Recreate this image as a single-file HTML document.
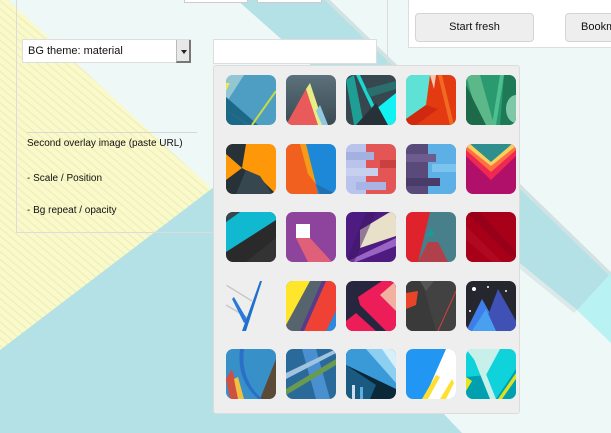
<!DOCTYPE html>
<html><head><meta charset="utf-8"><style>
*{box-sizing:border-box;margin:0;padding:0}
body{width:611px;height:433px;overflow:hidden;position:relative;background:#eef9f7;font-family:"Liberation Sans",sans-serif;font-size:10px;color:#111}
.abs{position:absolute}
.tile{position:absolute;width:50px;height:50px;border-radius:7px;overflow:hidden}
.tile svg{display:block}
</style></head><body>
<svg class="abs" style="left:0;top:0" width="611" height="433">
<defs><pattern id="st" width="6" height="6" patternUnits="userSpaceOnUse" patternTransform="rotate(40)"><rect width="6" height="6" fill="#f9f9c9"/><rect width="6" height="1.2" fill="#eeeebc"/></pattern></defs>
<polygon points="0,0 8,0 212,189 0,350" fill="url(#st)"/>
<polygon points="0,350 340,91 237,0 325,0 611,277 611,433 0,433" fill="#b4e1e6"/>
<polygon points="325,0 330,0 611,272 611,277" fill="#d2e2e2"/>
<polygon points="577,310 611,273 611,343" fill="#b9f2f2"/>
<polygon points="500,247 577,310 611,343 611,433 462,433 440,410" fill="#eef9f7"/>
<polygon points="500,247 577,310 574,313 498,251" fill="#dde9e9"/>
</svg>
<!-- top small selects -->
<div class="abs" style="left:184px;top:-10px;width:64px;height:13px;background:#fff;border:1px solid #ccc"></div>
<div class="abs" style="left:257px;top:-10px;width:65px;height:13px;background:#fff;border:1px solid #ccc"></div>
<!-- left panel -->
<div class="abs" style="left:16px;top:-5px;width:372px;height:238px;border:1px solid #dcdcdc;border-top:none"></div>
<div class="abs" style="left:22px;top:39px;width:169px;height:24px;background:#fff;border:1px solid #ddd;font-size:11px;padding:5px 0 0 5px">BG theme: material</div>
<div class="abs" style="left:176px;top:40px;width:15px;height:23px;background:#e8e8e8;border-left:1px solid #bbb;border-right:2px solid #777;border-bottom:2px solid #777"><div style="position:absolute;left:4px;top:10px;border-left:3px solid transparent;border-right:3px solid transparent;border-top:4px solid #222"></div></div>
<div class="abs" style="left:213px;top:39px;width:164px;height:25px;background:#fff;border:1px solid #ddd"></div>
<div class="abs" style="left:27px;top:132px;width:170px;height:1px;background:#d8d8d8"></div>
<div class="abs" style="left:27px;top:138px;font-size:10px">Second overlay image (paste URL)</div>
<div class="abs" style="left:27px;top:173px">- Scale / Position</div>
<div class="abs" style="left:27px;top:205px">- Bg repeat / opacity</div>
<!-- right panel -->
<div class="abs" style="left:408px;top:-2px;width:210px;height:50px;background:#fff;border:1px solid #ddd"></div>
<div class="abs" style="left:415px;top:13px;width:119px;height:29px;background:#eee;border:1px solid #d4d4d4;border-radius:4px;font-size:11px;text-align:center;line-height:27px">Start fresh</div>
<div class="abs" style="left:565px;top:13px;width:80px;height:29px;background:#eee;border:1px solid #d4d4d4;border-radius:4px;font-size:11px;line-height:27px;padding-left:15px">Bookmark</div>
<!-- popup -->
<div class="abs" style="left:213px;top:65px;width:307px;height:349px;background:#eeeeee;border:1px solid #dcdcdc;border-radius:3px"></div>

<div class="tile" style="left:226px;top:75px"><svg width="50" height="50"><rect width="50" height="50" fill="#4d9ec2"/><polygon points="0,0 18,0 0,28" fill="#93c6d2"/><polygon points="0,22 32,50 0,50" fill="#1d6886"/><polygon points="0,35 25,50 20,50" fill="#226f8a"/><line x1="26" y1="50" x2="50" y2="16" stroke="#c6d94a" stroke-width="2"/><polygon points="0,8 4,8 0,16" fill="#e8ec50"/></svg></div>
<div class="tile" style="left:286px;top:75px"><svg width="50" height="50"><defs><linearGradient id="g2" x1="0" y1="0" x2="0" y2="1"><stop offset="0" stop-color="#5b717b"/><stop offset="1" stop-color="#3b4a52"/></linearGradient></defs><rect width="50" height="50" fill="url(#g2)"/><polygon points="0,50 20,14 34,50" fill="#eb5a5a"/><polygon points="20,14 24,8 38,50 32,50" fill="#e8ee86"/><polygon points="30,36 34,30 42,50 36,50" fill="#90c8e0"/></svg></div>
<div class="tile" style="left:346px;top:75px"><svg width="50" height="50"><rect width="50" height="50" fill="#37474f"/><polygon points="0,5 8,0 18,50 8,50" fill="#1e9e94"/><polygon points="10,0 14,0 30,34 26,34" fill="#19d8d0"/><polygon points="30,34 50,18 50,50 24,50" fill="#12f2f2"/><polygon points="10,50 30,28 42,50" fill="#263238"/><polygon points="20,14 50,6 50,14 24,22" fill="#2b6e6e"/></svg></div>
<div class="tile" style="left:406px;top:75px"><svg width="50" height="50"><rect width="50" height="50" fill="#e33a12"/><polygon points="0,0 24,0 20,30 0,44" fill="#5ee2d6"/><polygon points="24,0 30,0 28,14" fill="#f6c8b0"/><polygon points="0,44 20,30 32,34 10,50 0,50" fill="#cf2a10"/><polygon points="32,0 36,0 48,50 44,50" fill="#f06a20"/></svg></div>
<div class="tile" style="left:466px;top:75px"><svg width="50" height="50"><rect width="50" height="50" fill="#2a9a70"/><polygon points="0,0 14,0 28,50 14,50" fill="#5cb888"/><polygon points="0,10 20,50 0,50" fill="#1c6a4a"/><polygon points="34,0 38,0 30,50 26,50" fill="#4ec090"/><polygon points="38,0 50,0 50,50 34,50" fill="#1e7a56"/><ellipse cx="50" cy="34" rx="10" ry="14" fill="#7ec8a8"/></svg></div>

<div class="tile" style="left:226px;top:144px"><svg width="50" height="50"><rect width="50" height="50" fill="#ff9808"/><polygon points="0,0 20,0 16,24 0,10" fill="#263238"/><polygon points="0,36 16,24 36,36 50,50 0,50" fill="#263238"/><polygon points="10,50 20,26 34,32 46,50" fill="#37474f"/></svg></div>
<div class="tile" style="left:286px;top:144px"><svg width="50" height="50"><rect width="50" height="50" fill="#1e88d8"/><polygon points="0,0 20,0 32,50 0,50" fill="#f26020"/><polygon points="14,0 20,0 30,40 22,30" fill="#f29c18"/><polygon points="30,40 50,50 34,50" fill="#2270b0"/></svg></div>
<div class="tile" style="left:346px;top:144px"><svg width="50" height="50"><rect width="50" height="50" fill="#b8c4ec"/><rect x="20" y="0" width="30" height="50" fill="#e45656"/><rect x="0" y="8" width="28" height="8" fill="#a4b0e0"/><rect x="0" y="24" width="32" height="8" fill="#c8d0f0"/><rect x="10" y="38" width="30" height="8" fill="#a8b4e4"/><rect x="34" y="16" width="16" height="8" fill="#c84040"/></svg></div>
<div class="tile" style="left:406px;top:144px"><svg width="50" height="50"><rect width="50" height="50" fill="#5a4a7a"/><rect x="22" y="0" width="28" height="50" fill="#5cb0e6"/><rect x="0" y="10" width="30" height="8" fill="#6e5c90"/><rect x="26" y="20" width="24" height="8" fill="#7cc4f0"/><rect x="0" y="34" width="34" height="8" fill="#4a3c6a"/></svg></div>
<div class="tile" style="left:466px;top:144px"><svg width="50" height="50"><rect width="50" height="50" fill="#b0106a"/><polygon points="0,0 50,0 50,12 25,36 0,12" fill="#ee2850"/><polygon points="0,0 50,0 50,6 25,28 0,6" fill="#ff7040"/><polygon points="0,0 50,0 50,2 25,22 0,2" fill="#f8d060"/><polygon points="4,0 46,0 25,18" fill="#2e8f8e"/></svg></div>

<div class="tile" style="left:226px;top:212px"><svg width="50" height="50"><rect width="50" height="50" fill="#2a2a2a"/><polygon points="0,10 14,0 50,0 50,8 0,40" fill="#10b8d0"/><polygon points="0,0 14,0 0,10" fill="#37474f"/><polygon points="20,50 50,26 50,50" fill="#333"/></svg></div>
<div class="tile" style="left:286px;top:212px"><svg width="50" height="50"><rect width="50" height="50" fill="#8e449c"/><polygon points="10,26 24,26 46,50 22,50" fill="#e0607a"/><rect x="10" y="12" width="14" height="14" fill="#fff"/></svg></div>
<div class="tile" style="left:346px;top:212px"><svg width="50" height="50"><rect width="50" height="50" fill="#4e1c80"/><polygon points="0,50 50,26 50,34 10,50" fill="#9a64c4"/><polygon points="14,18 44,0 50,0 50,24 14,36" fill="#e8e0c8"/><polygon points="20,0 30,0 8,50 0,50" fill="#3c1464" opacity=".5"/></svg></div>
<div class="tile" style="left:406px;top:212px"><svg width="50" height="50"><rect width="50" height="50" fill="#47808a"/><polygon points="0,0 24,0 12,50 0,50" fill="#e0222c"/><polygon points="12,50 22,30 32,30 42,50" fill="#b0404a"/><polygon points="20,24 26,16 28,24" fill="#1a9a9a"/></svg></div>
<div class="tile" style="left:466px;top:212px"><svg width="50" height="50"><rect width="50" height="50" fill="#a80018"/><polygon points="0,0 14,0 50,40 50,50" fill="#98001a"/><polygon points="0,14 36,50 26,50 0,28" fill="#b00820"/></svg></div>

<div class="tile" style="left:226px;top:281px"><svg width="50" height="50"><rect width="50" height="50" fill="#eeeeee"/><line x1="0" y1="4" x2="26" y2="20" stroke="#c8c8c8" stroke-width="1.5"/><line x1="0" y1="24" x2="24" y2="38" stroke="#c8c8c8" stroke-width="1.5"/><polygon points="8,16 22,40 18,42 6,18" fill="#2a7ad8"/><polygon points="34,0 36,0 20,50 16,50" fill="#1f6fd0"/></svg></div>
<div class="tile" style="left:286px;top:281px"><svg width="50" height="50"><rect width="50" height="50" fill="#56646e"/><polygon points="0,0 24,0 0,44" fill="#ffe62a"/><polygon points="40,0 50,0 50,50 18,50" fill="#f04234"/><polygon points="36,0 40,0 18,50 14,50" fill="#5a3a8a"/><polygon points="40,50 50,30 50,50" fill="#2a8ae0"/></svg></div>
<div class="tile" style="left:346px;top:281px"><svg width="50" height="50"><rect width="50" height="50" fill="#26263e"/><polygon points="12,16 36,0 50,0 50,50 40,50 14,24" fill="#ec1d58"/><polygon points="34,14 50,0 50,30" fill="#f2b0a0"/><polygon points="0,40 10,32 30,50 0,50" fill="#ec1d58"/></svg></div>
<div class="tile" style="left:406px;top:281px"><svg width="50" height="50"><rect width="50" height="50" fill="#424242"/><polygon points="0,0 16,0 30,50 0,50" fill="#3a3a3a"/><polygon points="0,12 12,10 10,24 0,28" fill="#e84428"/><line x1="50" y1="10" x2="32" y2="50" stroke="#d04040" stroke-width="1"/><polygon points="14,0 28,0 20,10" fill="#555"/></svg></div>
<div class="tile" style="left:466px;top:281px"><svg width="50" height="50"><rect width="50" height="50" fill="#26262e"/><polygon points="0,50 16,18 34,50" fill="#3d7ee8"/><polygon points="16,50 32,8 50,40 50,50" fill="#3f51b5"/><polygon points="6,50 20,28 30,50" fill="#4aa0f0"/><circle cx="8" cy="8" r="2" fill="#fff"/><circle cx="22" cy="6" r="1" fill="#fff"/><circle cx="40" cy="10" r="1" fill="#fff"/><circle cx="4" cy="30" r="1" fill="#fff"/></svg></div>

<div class="tile" style="left:226px;top:349px"><svg width="50" height="50"><rect width="50" height="50" fill="#3890c8"/><polygon points="50,10 50,50 34,50" fill="#5c4a38"/><polygon points="0,30 6,20 14,50 4,50" fill="#d05040"/><polygon points="8,30 12,28 18,50 12,50" fill="#f0c040"/><path d="M18 0 Q14 30 36 50 L32 50 Q10 30 14 0Z" fill="#2a70c8"/></svg></div>
<div class="tile" style="left:286px;top:349px"><svg width="50" height="50"><rect width="50" height="50" fill="#2a6a9a"/><polygon points="16,0 30,0 44,50 30,50" fill="#4a90d0"/><polygon points="0,40 50,10 50,16 0,46" fill="#6a9a50"/><polygon points="0,24 50,0 50,4 0,30" fill="#a0c4e0"/></svg></div>
<div class="tile" style="left:346px;top:349px"><svg width="50" height="50"><rect width="50" height="50" fill="#0a2838"/><polygon points="0,0 50,0 50,40 0,16" fill="#3a9ad8"/><polygon points="20,0 50,0 50,34" fill="#8ccff0"/><polygon points="36,0 50,0 50,20" fill="#d6f0fa"/><polygon points="0,16 30,36 24,50 0,50" fill="#1a5a80"/><rect x="6" y="36" width="3" height="14" fill="#cde"/><rect x="14" y="38" width="3" height="12" fill="#5ab0e0"/></svg></div>
<div class="tile" style="left:406px;top:349px"><svg width="50" height="50"><rect width="50" height="50" fill="#2196f3"/><polygon points="40,0 50,0 50,50 18,50" fill="#fff"/><polygon points="16,50 30,26 34,28 22,50" fill="#ffe030"/><polygon points="34,50 46,30 48,34 40,50" fill="#ffe030"/></svg></div>
<div class="tile" style="left:466px;top:349px"><svg width="50" height="50"><rect width="50" height="50" fill="#10d2da"/><polygon points="0,0 34,0 20,26" fill="#c8f0ea"/><polygon points="0,28 20,26 30,50 0,50" fill="#00a0b0"/><polygon points="30,50 50,20 50,50" fill="#00a0b0"/><polygon points="0,28 6,32 0,42" fill="#e6e620"/><polygon points="32,50 50,24 50,30 36,50" fill="#e0e020"/><polygon points="4,0 10,0 30,50 24,50" fill="#c8f0ea"/></svg></div>
</body></html>
